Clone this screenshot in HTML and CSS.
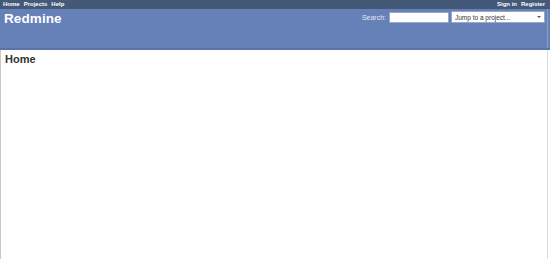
FILE: index.html
```html
<!DOCTYPE html>
<html lang="en">
<head>
  <meta charset="UTF-8">
  <title>Redmine</title>
  <link rel="stylesheet" href="styles.css">
</head>
<body>
  <div class="wrapper">
    <div id="top-menu">
      <ul class="menu">
        <li><a href="#">Home</a></li>
        <li><a href="#">Projects</a></li>
        <li><a href="#">Help</a></li>
      </ul>
      <ul class="menu account">
        <li><a href="#">Sign in</a></li>
        <li><a href="#">Register</a></li>
      </ul>
    </div>

    <div id="header">
      <h1>Redmine</h1>
      <div id="quick-search">
        <label for="q">Search:</label>
        <input type="text" id="q">
        <div class="jump">
          <span>Jump to a project...</span>
          <span class="caret"></span>
        </div>
      </div>
    </div>

    <div id="main">
      <div id="content">
        <h2>Home</h2>
      </div>
    </div>
  </div>
</body>
</html>
```

FILE: styles.css
```css
html, body {
  margin: 0;
  padding: 0;
  height: 100%;
}
body {
  font-family: 'Liberation Sans', Arial, sans-serif;
  background: #fff;
  color: #333;
}
.wrapper {
  height: 100%;
  display: flex;
  flex-direction: column;
}
#top-menu {
  background: #445878;
  height: 9px;
  display: flex;
  justify-content: space-between;
  padding: 0 5px 0 3px;
}
#top-menu ul {
  list-style: none;
  margin: 0;
  padding: 0;
  display: flex;
  gap: 4px;
}
#top-menu li {
  display: block;
  height: 9px;
}
#top-menu a {
  display: block;
  color: #fff;
  text-decoration: none;
  font-size: 6px;
  font-weight: bold;
  line-height: 9px;
}
#header {
  background: #6680b8;
  height: 39px;
  border-bottom: 2px solid #5a73a8;
  display: flex;
  justify-content: space-between;
  align-items: flex-start;
  padding: 0 5px 0 4px;
  box-shadow: inset -2px 0 0 #6680b8, inset -3px 0 0 #8c9fc9;
}
#header h1 {
  margin: 2px 0 0 0;
  color: #fff;
  font-size: 13.5px;
  font-weight: bold;
  letter-spacing: 0.1px;
}
#quick-search {
  display: flex;
  align-items: center;
  margin-top: 2px;
  gap: 2px;
}
#quick-search label {
  color: #e4e9f4;
  font-size: 7px;
  margin-right: 1px;
}
#quick-search input {
  width: 60px;
  height: 11px;
  box-sizing: border-box;
  border: 1px solid #9aa9c9;
  border-radius: 1px;
  padding: 0;
  background: #fff;
}
.jump {
  width: 94px;
  height: 12px;
  box-sizing: border-box;
  background: #fff;
  border: 1px solid #9aa9c9;
  border-radius: 1px;
  display: flex;
  align-items: center;
  justify-content: space-between;
  padding: 0 3px 0 3px;
  font-size: 6.5px;
  color: #333;
}
.caret {
  width: 0;
  height: 0;
  border-left: 2px solid transparent;
  border-right: 2px solid transparent;
  border-top: 2px solid #555;
}
#main {
  flex: 1;
  border-left: 1px solid #c8c8c8;
  margin-right: 2px;
  border-right: 1px solid #dcdcdc;
}
#content {
  padding: 3px 4px;
}
#content h2 {
  margin: 0;
  font-size: 11px;
  font-weight: bold;
  color: #333;
}
```
